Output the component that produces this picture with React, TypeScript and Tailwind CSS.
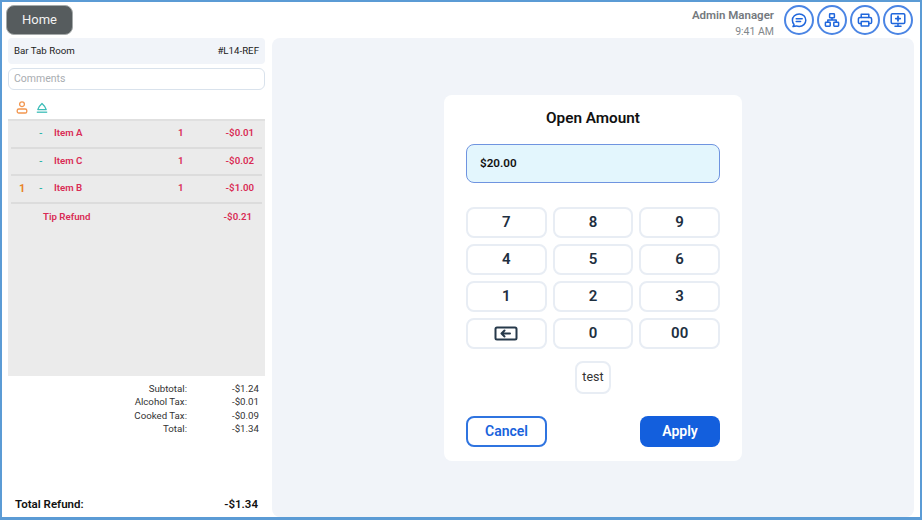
const items = [
  { seat: "", name: "Item A", qty: "1", price: "-$0.01" },
  { seat: "", name: "Item C", qty: "1", price: "-$0.02" },
  { seat: "1", name: "Item B", qty: "1", price: "-$1.00" },
];

const totals = [
  ["Subtotal:", "-$1.24"],
  ["Alcohol Tax:", "-$0.01"],
  ["Cooked Tax:", "-$0.09"],
  ["Total:", "-$1.34"],
];

const keys = ["7", "8", "9", "4", "5", "6", "1", "2", "3"];

const CircleBtn = ({ children }: { children: React.ReactNode }) => (
  <button className="flex h-[30px] w-[30px] items-center justify-center rounded-full border-2 border-[#4b85e4] text-[#1f66dc]">
    <svg width="18" height="18" viewBox="0 0 18 18" fill="none" stroke="currentColor" strokeWidth="1.5" strokeLinecap="round" strokeLinejoin="round">
      {children}
    </svg>
  </button>
);

const Key = ({ children }: { children: React.ReactNode }) => (
  <button className="flex h-[31px] items-center justify-center rounded-[8px] border-2 border-[#e8edf4] text-[15px] font-semibold text-[#1e2f3f]">
    {children}
  </button>
);

export default function App() {
  return (
    <div className="flex h-[520px] w-[922px] flex-col border-2 border-b-[3px] border-[#5b9bd5] bg-white font-['Roboto',sans-serif]">
      <header className="flex h-[36px] shrink-0 items-start justify-between pl-1 pr-[7px] pt-[3px]">
        <button className="flex h-[30px] w-[67px] items-center justify-center rounded-[8px] border border-[#a5aaaa] bg-[#565c5e] text-[13px] text-[#f2f2f2]">
          Home
        </button>
        <div className="flex items-start gap-[3px]">
          <div className="mr-[7px] flex flex-col items-end pt-[3px]">
            <span className="text-[11.5px] font-semibold leading-[14px] text-[#74797e]">Admin Manager</span>
            <span className="mt-[4px] text-[10.5px] leading-[12px] text-[#82878b]">9:41 AM</span>
          </div>
          <CircleBtn>
            <path d="M4 13.6c-1-1.2-1.6-2.7-1.6-4.3C2.4 5.7 5.3 3 9.2 3s6.6 2.7 6.6 6.2-2.9 6.2-6.6 6.2c-1 0-2-.2-2.9-.5L3 15.6z" />
            <path d="M6.2 7.8h6M6.2 10.6h4.4" />
          </CircleBtn>
          <CircleBtn>
            <rect x="6.6" y="2.8" width="4.8" height="4" rx=".6" />
            <rect x="2.4" y="11.2" width="4.8" height="4" rx=".6" />
            <rect x="10.8" y="11.2" width="4.8" height="4" rx=".6" />
            <path d="M4.8 11.2V9h8.4v2.2M9 6.8V9" />
          </CircleBtn>
          <CircleBtn>
            <path d="M5.2 6.4V3.2h7.6v3.2" />
            <path d="M5.2 12.6H3.8a1.4 1.4 0 0 1-1.4-1.4V8a1.6 1.6 0 0 1 1.6-1.6h10A1.6 1.6 0 0 1 15.6 8v3.2a1.4 1.4 0 0 1-1.4 1.4h-1.4" />
            <rect x="5.2" y="10.4" width="7.6" height="4.6" rx=".6" />
          </CircleBtn>
          <CircleBtn>
            <rect x="2.2" y="2.8" width="13.6" height="9.6" rx="1.2" />
            <path d="M9 12.4v2.6M6 15.2h6" />
            <path d="M9 5.4v4.4M6.8 7.6h4.4" strokeWidth="1.8" />
          </CircleBtn>
        </div>
      </header>

      <main className="flex min-h-0 flex-1 gap-[7px] pl-[6px] pr-[6px]">
        <aside className="flex w-[257px] shrink-0 flex-col">
          <div className="flex h-[26px] shrink-0 items-center justify-between rounded-[4px] bg-[#f1f4f9] px-[6px] pt-[1px] text-[9.7px] text-[#222]">
            <span>Bar Tab Room</span>
            <span>#L14-REF</span>
          </div>
          <div className="mt-[4px] flex h-[22px] shrink-0 items-center rounded-[6px] border border-[#d9e2ec] px-[5px] text-[10.5px] text-[#a9adb1]">
            Comments
          </div>
          <div className="flex h-[29px] shrink-0 items-center gap-[8px] pl-[8px] pt-[6px]">
            <svg width="12" height="13" viewBox="0 0 12 13" fill="none" stroke="#f2964f" strokeWidth="1.3">
              <circle cx="6" cy="3.2" r="2.4" />
              <rect x="1.2" y="8" width="9.6" height="4" rx="1.6" />
            </svg>
            <svg width="12" height="13" viewBox="0 0 12 13" fill="none" stroke="#3dbdb8" strokeWidth="1.3" strokeLinejoin="round">
              <path d="M1.8 8.6C2.3 6.2 4 4.2 6 2.4c2 1.8 3.7 3.8 4.2 6.2z" />
              <path d="M.8 11.2h10.4" />
            </svg>
          </div>
          <div className="flex h-[257px] shrink-0 flex-col border-t-2 border-[#e0e0e0] bg-[#ebebeb] px-[3px] text-[9.7px] font-semibold text-[#d92b55]">
            {items.map((item) => (
              <div key={item.name} className="flex h-[27.5px] items-center border-b-2 border-[#dcdcdc]">
                <span className="w-[15px] pl-[8px] text-[11px] font-bold text-[#e8832a]">{item.seat}</span>
                <span className="w-[16px] pl-[13px] text-[#2bb3a8]">-</span>
                <span className="ml-[12px] w-[124px]">{item.name}</span>
                <span className="w-[22px]">{item.qty}</span>
                <span className="ml-auto pr-[8px]">{item.price}</span>
              </div>
            ))}
            <div className="flex h-[27.5px] items-center pl-[32px] pr-[10px]">
              <span>Tip Refund</span>
              <span className="ml-auto">-$0.21</span>
            </div>
          </div>
          <div className="mt-[6px] flex flex-col pr-[6px] text-[9.7px] leading-[13.4px] text-[#333]">
            {totals.map(([label, value]) => (
              <div key={label} className="flex justify-end">
                <span>{label}</span>
                <span className="w-[72px] text-right">{value}</span>
              </div>
            ))}
          </div>
          <div className="mt-auto flex h-[21px] items-start justify-between px-[7px] text-[11.5px] font-semibold text-[#111]">
            <span>Total Refund:</span>
            <span>-$1.34</span>
          </div>
        </aside>

        <section className="flex flex-1 justify-center rounded-[8px] bg-[#f1f4f9] pt-[57px]">
          <div className="flex h-[366px] w-[298px] flex-col rounded-[8px] bg-white px-[22px] pt-[13px]">
            <h2 className="text-center text-[15.3px] font-semibold leading-[20px] text-[#111]">Open Amount</h2>
            <div className="mt-[16px] flex h-[39px] items-center rounded-[8px] border border-[#6f94e0] bg-[#e3f6fd] px-[13px] text-[11.7px] font-semibold text-[#111]">
              $20.00
            </div>
            <div className="mt-[24px] grid grid-cols-3 gap-x-[6px] gap-y-[6px]">
              {keys.map((k) => (
                <Key key={k}>{k}</Key>
              ))}
              <Key>
                <svg width="24" height="15" viewBox="0 0 24 15" fill="none" stroke="#26394a" strokeWidth="2" strokeLinecap="round" strokeLinejoin="round">
                  <rect x="1.5" y="1.5" width="21" height="12" rx="1.5" />
                  <path d="M16 7.5H7.5M10.5 4.5l-3 3 3 3" />
                </svg>
              </Key>
              <Key>0</Key>
              <Key>00</Key>
            </div>
            <div className="mt-[12px] flex justify-center">
              <button className="flex h-[33px] w-[36px] items-center justify-center rounded-[8px] border-2 border-[#e8edf4] text-[12.5px] text-[#333]">
                test
              </button>
            </div>
            <div className="mt-[22px] flex items-center justify-between">
              <button className="h-[31px] w-[81px] rounded-[8px] border-2 border-[#2f74e0] text-[14px] font-semibold text-[#1a63dc]">
                Cancel
              </button>
              <button className="h-[31px] w-[80px] rounded-[8px] bg-[#135fdd] text-[14px] font-semibold text-white">
                Apply
              </button>
            </div>
          </div>
        </section>
      </main>
    </div>
  );
}
